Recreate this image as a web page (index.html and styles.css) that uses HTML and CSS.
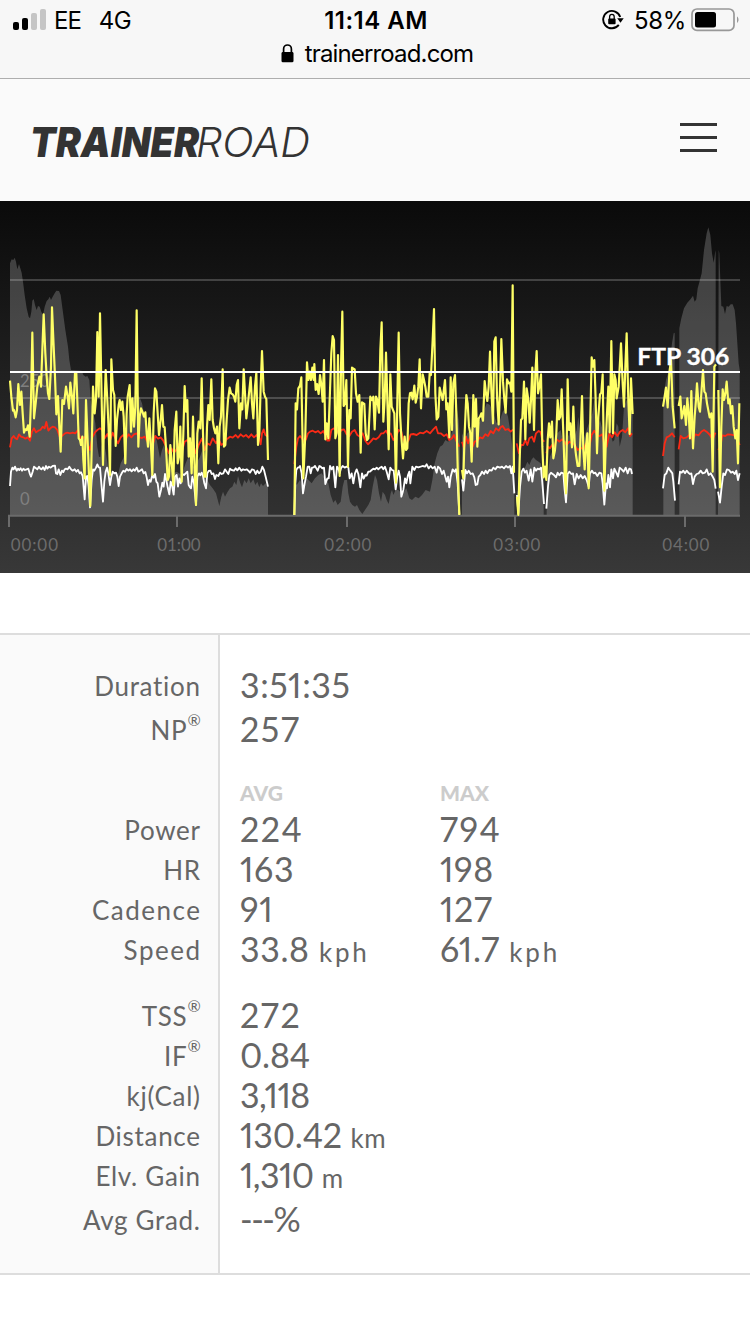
FILE: index.html
```
<!DOCTYPE html>
<html lang="en">

<head>
    <meta charset="utf-8">
    <title>TrainerRoad</title>
    <link rel="stylesheet" href="styles.css">
</head>

<body>
    <div class="browser-bar">
        <div class="status">
            <div class="status-left">
                <svg width="34" height="22" viewBox="0 0 34 22">
                    <rect x="0" y="13" width="6" height="8" rx="2" />
                    <rect x="9" y="9" width="6" height="12" rx="2" />
                    <rect x="18" y="4" width="6" height="17" rx="2" fill="#c5c5c5" />
                    <rect x="27" y="0" width="6" height="21" rx="2" fill="#c5c5c5" />
                </svg>
                <span class="carrier">EE</span>
                <span class="network">4G</span>
            </div>
            <div class="time">11:14 AM</div>
            <div class="status-right">
                <svg width="22" height="22" viewBox="0 0 22 22">
                    <path d="M16.8 15.9A8.7 8.7 0 1 1 18.2 8" fill="none" stroke="#000" stroke-width="1.9" />
                    <path d="M15.2 9.2h6.5l-3.2 4.6z" />
                    <rect x="6.2" y="9.5" width="7.4" height="5.7" rx="1" />
                    <path d="M7.6 10V7.7a2.3 2.3 0 0 1 4.6 0V10" fill="none" stroke="#000" stroke-width="1.3" />
                </svg>
                <span class="percent">58%</span>
                <svg width="48" height="24" viewBox="0 0 48 24">
                    <rect x="1" y="1" width="42" height="21.4" rx="5" fill="none" stroke="#989898" stroke-width="1.7" />
                    <rect x="4" y="4" width="21" height="15.4" rx="2.5" />
                    <path d="M46 8.5c2 1.4 2 5 0 6.5z" fill="#989898" />
                </svg>
            </div>
        </div>
        <div class="address">
            <svg width="13" height="19" viewBox="0 0 13 19">
                <rect x="0.5" y="8" width="12" height="10.3" rx="1.4" />
                <path d="M2.6 9V5a3.9 4 0 0 1 7.8 0v4" fill="none" stroke="#000" stroke-width="1.7" />
            </svg>
            <span class="domain">trainerroad.com</span>
        </div>
    </div>

    <header class="header">
        <svg class="logo" width="300" height="60" viewBox="0 0 300 60">
            <text class="logo-bold" x="0" y="47" textLength="169" lengthAdjust="spacingAndGlyphs">TRAINER</text>
            <text class="logo-light" x="166" y="47" textLength="114" lengthAdjust="spacingAndGlyphs">ROAD</text>
        </svg>
        <div class="menu">
            <span></span>
            <span></span>
            <span></span>
        </div>
    </header>

    <svg class="chart" width="750" height="372" viewBox="0 3 2250 1116">
        <!-- elevation -->
        <g class="elevation">
            <path d="M30 945V190L35 178 40 180 44 173 48 185 52 208 57 192 61 205 65 218 69 245 74 285 80 325 86 350 90 355 94 335 97 302 101 297 105 315 110 330 114 318 119 320 124 335 129 345 134 320 140 303 145 298 149 290 153 300 158 290 164 280 169 272 177 273 182 285 188 330 196 390 204 440 208 480 213 510 245 512 250 525 257 530 262 528 268 540 272 600 280 640 286 670 292 740 297 770 301 772 304 740 310 720 318 760 324 800 332 820 345 822 355 820 362 790 370 775 378 740 385 650 392 600 400 590 410 585 418 590 426 610 434 650 444 690 452 720 460 700 470 720 480 775 486 750 492 735 500 770 508 800 520 820 530 815 545 825 557 790 565 770 570 780 580 800 590 790 600 770 607 750 613 800 622 840 630 855 638 865 648 880 658 918 664 890 669 875 675 890 683 875 690 865 697 860 703 845 709 855 714 828 721 850 726 862 733 840 740 850 746 835 752 850 760 838 766 855 772 845 778 862 783 850 789 858 797 850 804 862V945z" />
            <path d="M883 945L884 845 890 855 900 840 910 860 920 835 935 850 945 835 955 825 965 820 975 835 985 850 992 885 1000 908 1006 900 1013 915 1022 905 1028 860 1033 840 1041 840 1045 880 1050 905 1057 915 1065 920 1071 915 1078 930 1087 942 1095 930 1105 915 1112 900 1118 860 1125 825 1131 840 1137 880 1143 905 1148 875 1155 885 1160 900 1166 912 1172 880 1176 870 1180 885 1187 870 1195 870 1205 880 1212 875 1219 865 1228 895 1236 900 1246 890 1256 895 1266 885 1277 870 1290 875 1297 840 1304 790 1312 760 1320 740 1328 735 1336 720 1345 725 1355 700 1362 660 1366 620 1371 630 1376 660 1380 720V945z" />
            <path d="M1386 945V700L1394 720 1402 700 1412 690 1424 680 1440 665 1450 640 1460 610 1470 615 1480 640 1490 670 1500 660 1508 635 1516 625 1524 650 1532 700 1538 750 1543 800V945z" />
            <path d="M1551 945V880L1560 850 1568 810 1576 800 1582 785 1588 795 1594 780 1600 772 1608 780 1616 785 1622 790 1631 830V945z" />
            <path d="M1640 945V850L1650 770 1656 755 1664 740 1672 700 1682 690 1690 730 1700 720 1712 690 1720 720 1730 690 1735 650 1740 700 1750 720 1760 690 1770 660 1777 640 1783 600 1788 605 1794 680 1800 660 1808 690 1815 740 1825 690 1832 700 1838 725 1843 720 1850 670 1855 680 1859 740 1866 710 1872 620 1880 600 1890 600 1898 620V945z" />
            <path d="M1990 945V590L1998 540 2004 520 2010 480 2016 430 2021 400 2024 398V945z" />
            <path d="M2038 945V385L2044 355 2052 325 2062 308 2072 297 2079 287 2084 305 2089 298 2093 265 2099 243 2105 220 2112 150 2120 100 2125 82 2131 105 2136 160 2141 188 2145 160 2147 150V945z" />
            <path d="M2154 945L2156 150 2158 160 2161 240 2164 318 2170 320 2175 342 2180 318 2186 320 2192 313 2198 313 2204 330 2208 370 2212 430 2216 490 2219 510V945z" />
        </g>

        <!-- grid and axis -->
        <path class="grid" d="M30 240H2220M30 594H2220" />
        <path class="axis" d="M24 947H2220M27 950V981M531 950V981M1041 950V981M1545 950V981M2055 950V981" />
        <g class="y-labels">
            <text x="60" y="561" textLength="88">250</text>
            <text x="60" y="915" textLength="31">0</text>
        </g>
        <g class="x-labels">
            <text x="32" y="1053" textLength="142">00:00</text>
            <text x="472" y="1053" textLength="130">01:00</text>
            <text x="973" y="1053" textLength="141">02:00</text>
            <text x="1480" y="1053" textLength="141">03:00</text>
            <text x="1987" y="1053" textLength="141">04:00</text>
        </g>

        <!-- heart rate -->
        <g class="line hr">
            <polyline points="30,742 35,715 41,708 46,715 51,718 57,703 63,710 70,712 76,716 83,712 90,722 96,695 102,685 108,697 115,692 121,690 128,680 134,685 139,666 145,692 151,685 158,680 165,682 172,690 180,712 187,707 195,700 202,698 210,700 218,698 226,700 234,690 241,718 248,715 256,710 262,730 270,750 277,712 285,697 292,690 300,685 307,690 314,715 322,702 330,722 338,698 346,715 354,730 362,712 370,705 378,716 386,703 394,712 402,703 410,700 418,712 426,714 434,710 442,725 450,715 458,735 466,708 474,716 482,712 490,722 498,740 507,760 514,745 522,758 530,748 538,730 546,752 554,725 562,720 570,735 578,730 588,760 596,735 606,715 614,750 622,730 630,735 638,715 648,730 656,718 664,735 672,730 680,718 690,710 698,713 707,705 714,713 722,703 730,710 738,705 746,713 754,703 762,712 770,705 778,715 782,733 786,700 791,688 796,705 804,710" />
            <polyline points="883,792 889,740 894,715 900,708 906,715 912,725 918,718 924,700 930,695 938,692 946,697 954,693 962,700 970,693 976,705 982,722 988,722 994,690 1002,685 1010,692 1018,700 1024,690 1032,688 1040,703 1048,708 1056,695 1064,690 1072,705 1080,710 1088,700 1096,722 1104,733 1112,725 1120,715 1128,718 1136,712 1144,700 1150,700 1158,692 1164,703 1172,700 1180,720 1188,710 1196,690 1204,695 1210,720 1218,732 1226,720 1232,703 1240,702 1250,705 1260,698 1270,700 1280,693 1290,700 1300,688 1308,680 1314,700 1322,700 1332,708 1340,703 1348,720 1356,715 1362,705 1370,725 1378,740" />
            <polyline points="1386,725 1392,745 1398,710 1404,730 1411,710 1418,740 1424,725 1432,722 1440,712 1448,715 1456,703 1464,708 1472,693 1480,700 1488,685 1496,692 1502,682 1508,678 1516,690 1524,687 1532,695 1540,688" />
            <polyline points="1550,730 1557,760 1563,735 1570,735 1576,720 1582,735 1588,715 1596,710 1602,725 1608,700 1616,693 1622,697 1627,720 1633,725" />
            <polyline points="1639,760 1645,740 1650,745 1656,735 1663,740 1670,718 1678,725 1686,718 1693,725 1700,735 1708,725 1716,730 1724,735 1733,750 1742,743 1750,748 1758,730 1766,750 1775,705 1783,692 1791,706 1799,708 1807,703 1813,735 1820,740 1828,700 1836,712 1844,697 1852,708 1860,695 1868,690 1876,697 1884,685 1890,708 1896,700" />
            <polyline points="1989,768 1994,730 2000,712 2008,708 2016,700 2024,712" />
            <polyline points="2036,748 2042,708 2050,715 2060,712 2068,705 2078,720 2086,703 2096,706 2104,695 2112,690 2122,697 2130,705 2138,720 2146,698" />
            <polyline points="2155,750 2161,738 2167,706 2176,708 2184,703 2194,704 2202,706 2210,712 2219,735" />
        </g>

        <!-- cadence -->
        <g class="line cadence">
            <polyline points="30,858 33,815 37,803 41,808 45,800 50,812 54,806 58,810 62,805 66,812 70,806 75,810 80,808 85,806 89,820 93,830 98,815 102,800 107,804 112,808 117,800 121,806 125,808 129,802 134,810 138,798 142,806 147,800 152,803 158,798 165,797 168,820 172,822 176,808 181,825 186,812 190,816 194,808 198,806 203,808 208,800 213,808 218,812 224,808 229,815 234,810 239,820 243,817 248,828 254,898 258,830 262,828 266,860 270,922 275,840 279,808 283,812 288,803 292,793 296,802 300,803 304,850 309,905 313,845 317,815 321,803 325,820 330,855 334,830 338,815 343,820 348,818 352,830 356,858 360,830 365,820 370,812 375,815 380,807 385,812 390,808 395,814 400,808 405,812 410,803 415,815 420,812 426,808 431,820 436,816 440,832 444,855 448,840 452,845 457,825 461,833 465,822 469,845 473,850 478,890 483,870 487,848 491,860 495,822 499,840 503,862 508,883 512,845 516,855 521,884 525,830 530,825 534,860 538,835 542,850 547,822 552,825 557,820 562,815 566,855 570,862 573,865 577,830 582,850 588,915 592,830 597,820 601,826 605,818 609,828 613,850 618,865 622,820 626,813 631,812 635,822 640,820 645,837 649,825 655,828 660,818 665,822 670,820 675,808 680,815 685,822 690,806 695,810 702,812 707,805 712,811 718,803 724,812 729,808 735,810 740,808 745,812 750,818 756,808 762,810 767,822 772,812 777,820 782,815 787,800 792,810 797,830 804,860" />
            <polyline points="883,945 886,850 889,810 893,803 897,802 900,798 905,820 909,880 914,850 918,830 923,800 928,800 932,820 936,803 941,802 945,798 949,805 953,812 958,798 962,800 967,805 972,803 976,852 982,835 986,835 990,798 995,808 1000,800 1006,862 1011,800 1015,805 1019,820 1023,805 1028,798 1034,803 1040,800 1045,802 1049,835 1055,820 1060,850 1065,820 1070,808 1075,822 1081,862 1086,820 1091,836 1096,825 1100,827 1105,815 1110,815 1115,810 1120,806 1125,808 1130,803 1135,808 1140,803 1145,800 1150,808 1155,800 1160,815 1166,838 1171,803 1176,810 1181,812 1187,868 1192,830 1196,812 1200,830 1204,890 1210,870 1215,835 1219,850 1224,825 1228,815 1231,850 1237,800 1243,810 1248,800 1255,802 1262,800 1268,798 1275,800 1280,793 1286,805 1292,798 1298,805 1304,800 1310,818 1314,800 1320,805 1326,822 1331,812 1336,830 1340,845 1344,830 1348,862 1352,830 1358,808 1363,815 1368,808 1373,850 1378,943" />
            <polyline points="1386,838 1390,872 1396,810 1401,820 1406,812 1412,822 1418,820 1423,832 1427,855 1432,853 1436,830 1441,825 1446,815 1452,822 1457,812 1462,820 1468,810 1475,812 1480,803 1486,808 1492,800 1500,803 1506,800 1512,805 1518,798 1524,803 1530,798 1534,820 1538,800 1543,880" />
            <polyline points="1551,885 1555,940 1560,860 1565,815 1570,806 1575,818 1580,812 1586,842 1592,808 1597,845 1603,803 1608,812 1613,806 1618,808 1623,803 1628,860 1632,912" />
            <polyline points="1639,926 1644,860 1648,825 1653,818 1658,822 1663,826 1668,832 1673,818 1678,826 1684,818 1690,820 1694,870 1698,907 1703,822 1708,815 1714,822 1719,820 1724,853 1730,822 1736,835 1742,825 1748,835 1754,828 1760,840 1766,860 1770,820 1776,812 1781,820 1786,818 1792,828 1798,818 1804,820 1808,850 1813,914 1818,850 1821,865 1825,825 1830,862 1834,808 1839,835 1843,806 1850,820 1854,830 1859,803 1865,808 1871,815 1877,803 1883,820 1888,806 1893,808 1896,822" />
            <polyline points="1989,865 1994,825 1999,820 2005,803 2011,812 2017,820 2020,845 2025,902" />
            <polyline points="2036,853 2040,815 2045,818 2050,812 2055,820 2060,812 2065,818 2070,822 2074,820 2079,852 2084,830 2090,822 2096,820 2102,812 2108,820 2115,818 2120,808 2126,825 2132,820 2138,830 2143,840 2147,866" />
            <polyline points="2154,875 2160,908 2165,860 2170,820 2175,825 2181,808 2187,810 2193,818 2198,815 2204,822 2209,812 2214,840 2219,820" />
        </g>

        <!-- power -->
        <g class="line power">
            <polyline points="30,542 34,590 39,632 42,630 47,652 51,630 55,552 60,615 64,575 68,640 72,698 76,688 80,690 84,676 89,710 93,600 97,398 102,655 107,610 112,560 118,530 123,560 127,450 131,343 136,460 140,530 144,580 148,597 153,500 156,322 161,440 165,530 169,643 174,588 177,660 182,755 187,600 192,612 198,560 203,590 207,625 211,548 216,590 220,640 225,518 229,520 233,630 236,715 240,720 243,735 247,710 250,780 254,835 258,600 262,700 266,800 271,918 275,750 279,560 284,640 288,600 292,396 296,590 300,340 305,600 309,795 313,640 317,510 322,600 326,690 330,825 334,478 339,570 343,585 347,738 351,660 356,615 359,600 363,630 367,605 371,650 376,790 380,640 383,590 389,555 393,695 397,595 402,680 406,620 410,331 415,740 419,650 423,625 428,637 432,650 436,637 440,700 444,740 448,655 453,740 457,825 461,640 465,565 469,575 473,640 477,705 482,660 486,615 490,680 494,682 499,760 503,840 507,830 511,735 516,800 520,855 524,690 529,635 533,790 537,770 541,680 545,845 550,700 554,558 558,635 562,600 566,770 570,715 575,820 579,650 583,780 588,915 592,700 596,665 601,685 605,535 609,700 613,830 617,830 621,680 625,615 629,660 634,538 638,660 642,685 646,700 651,680 655,790 659,680 663,650 668,508 672,740 676,735 680,660 684,600 689,563 693,580 698,583 702,590 706,605 710,555 714,540 718,685 723,610 727,628 731,508 735,580 739,655 744,610 748,570 752,532 756,610 760,655 765,560 769,518 774,735 778,700 782,560 786,453 791,575 795,590 799,597 804,780" />
            <polyline points="883,945 887,610 891,628 895,565 900,557 904,532 910,835 916,700 921,487 925,540 929,515 933,540 937,503 941,540 943,492 947,570 951,552 956,582 960,525 964,555 968,605 972,480 976,718 980,670 985,715 989,600 994,460 998,408 1002,420 1006,715 1010,700 1014,465 1019,828 1023,500 1027,335 1031,618 1035,610 1039,540 1044,800 1048,630 1052,655 1056,503 1064,508 1068,580 1073,605 1078,585 1082,758 1086,607 1093,612 1097,700 1101,720 1105,715 1111,590 1116,600 1120,590 1124,688 1128,590 1132,600 1137,638 1141,450 1145,367 1150,665 1154,600 1158,458 1162,600 1166,748 1171,523 1175,620 1183,640 1188,848 1192,600 1196,398 1200,640 1204,710 1209,775 1214,710 1218,750 1222,745 1226,610 1230,580 1234,578 1238,598 1243,557 1247,608 1251,590 1255,560 1259,478 1263,625 1268,523 1272,540 1276,560 1280,590 1285,590 1289,520 1293,525 1298,420 1302,327 1306,580 1310,658 1315,650 1319,563 1323,580 1328,600 1335,540 1339,628 1343,610 1348,712 1352,532 1356,690 1360,550 1365,525 1369,640 1373,800 1378,945" />
            <polyline points="1386,810 1390,835 1394,700 1399,585 1403,610 1407,680 1411,700 1415,785 1420,585 1424,680 1428,597 1432,740 1436,655 1440,650 1444,640 1449,662 1454,543 1458,580 1462,603 1466,560 1470,455 1474,570 1479,670 1483,425 1487,412 1491,590 1496,673 1500,570 1504,417 1509,545 1513,600 1517,638 1521,538 1526,550 1530,548 1534,575 1538,256 1542,818" />
            <polyline points="1551,890 1555,945 1559,780 1563,660 1567,655 1572,545 1576,718 1580,565 1585,600 1589,668 1593,600 1597,503 1602,690 1606,520 1610,453 1614,580 1618,560 1623,523 1627,740 1631,832 1635,800 1639,840 1643,720 1647,670 1651,712 1656,665 1660,775 1665,750 1669,700 1673,600 1677,658 1681,650 1685,568 1690,700 1694,820 1698,880 1703,538 1707,690 1711,670 1716,742 1720,620 1724,730 1728,765 1733,798 1738,798 1742,700 1746,588 1750,750 1754,808 1758,740 1762,700 1766,865 1770,700 1775,472 1779,500 1783,480 1787,600 1791,760 1795,650 1800,583 1804,578 1808,523 1813,872 1817,740 1821,640 1825,560 1829,697 1834,423 1839,700 1843,523 1847,540 1850,595 1856,560 1863,430 1868,550 1872,620 1876,500 1880,400 1885,600 1889,702 1893,535 1898,642" />
            <polyline points="1989,620 1994,590 1998,563 2003,622 2008,520 2013,480 2018,620 2024,685" />
            <polyline points="2036,618 2041,590 2045,655 2049,640 2053,618 2058,675 2062,595 2066,640 2070,715 2074,573 2079,745 2084,650 2088,600 2091,550 2096,620 2100,635 2104,580 2109,510 2113,575 2117,580 2121,610 2129,652 2134,640 2138,815 2143,500 2148,493" />
            <polyline points="2155,570 2160,862 2164,680 2168,568 2172,600 2176,580 2180,545 2185,610 2189,598 2193,640 2197,618 2201,680 2206,715 2210,690 2214,790 2218,610" />
        </g>

        <path class="ftp-line" d="M30 516H2220" />
        <text class="ftp-label" x="1912" y="494" textLength="276" lengthAdjust="spacingAndGlyphs">FTP 306</text>
    </svg>

    <section class="stats">
        <div class="row tall"><div class="label">Duration</div><div class="value">3:51:35</div></div>
        <div class="row tall"><div class="label">NP<sup>®</sup></div><div class="value open">257</div></div>
        <div class="row heads"><div class="label"></div><div class="value head">AVG</div><div class="value head">MAX</div></div>
        <div class="row"><div class="label">Power</div><div class="value open">224</div><div class="value open">794</div></div>
        <div class="row"><div class="label">HR</div><div class="value">163</div><div class="value">198</div></div>
        <div class="row"><div class="label loose">Cadence</div><div class="value">91</div><div class="value">127</div></div>
        <div class="row"><div class="label loose">Speed</div><div class="value">33.8 <small class="wide">kph</small></div><div class="value">61.7<small class="wide"> kph</small></div></div>
        <div class="row gap"><div class="label">TSS<sup>®</sup></div><div class="value open">272</div></div>
        <div class="row"><div class="label">IF<sup>®</sup></div><div class="value tight">0.84</div></div>
        <div class="row"><div class="label">kj(Cal)</div><div class="value tighter">3,118</div></div>
        <div class="row"><div class="label">Distance</div><div class="value tight">130.42 <small>km</small></div></div>
        <div class="row"><div class="label">Elv. Gain</div><div class="value tighter">1,310 <small>m</small></div></div>
        <div class="row last"><div class="label">Avg Grad.</div><div class="value dashes">---%</div></div>
    </section>
</body>

</html>
```
FILE: styles.css
```
body {
    margin: 0;
    background-color: #fff;
    font-family: Lato, "Open Sans", sans-serif;
    color: #666;
}

svg {
    display: block;
}

/* Browser bar */
.browser-bar {
    box-sizing: border-box;
    height: 79px;
    background-color: #f7f7f7;
    border-bottom: 1px solid #aeaeae;
    color: #000;
    font-family: Inter, sans-serif;
    font-size: 24px;
}

.status {
    display: grid;
    grid-template-columns: 1fr auto 1fr;
    align-items: center;
    height: 40px;
    padding: 0 11px 0 13px;
}

.status-left,
.status-right {
    display: flex;
    align-items: center;
}

.status-right {
    justify-content: flex-end;
}

.carrier {
    margin-left: 7px;
    letter-spacing: -1px;
}

.network {
    margin-left: 18px;
    letter-spacing: -0.5px;
}

.time {
    font-weight: 600;
    font-size: 24px;
    letter-spacing: 0.5px;
}

.percent {
    margin: 0 5px 0 10px;
    letter-spacing: -0.3px;
}

.address {
    display: flex;
    justify-content: center;
    align-items: center;
    gap: 11px;
    height: 27px;
    padding-left: 4px;
}

.domain {
    letter-spacing: -0.85px;
}

/* Header */
.header {
    display: flex;
    justify-content: space-between;
    align-items: center;
    height: 122px;
    padding: 0 33px 0 30px;
    background-color: #fafafa;
}

.logo text {
    font-family: Inter, sans-serif;
    font-style: italic;
    font-size: 41px;
    fill: #333;
}

.logo .logo-bold {
    font-weight: 900;
}

.logo .logo-light {
    font-weight: 300;
}

.menu {
    display: flex;
    flex-direction: column;
    gap: 10px;
    width: 37px;
    padding-bottom: 6px;
}

.menu span {
    height: 3px;
    background-color: #333;
}

/* Chart */
.chart {
    background: linear-gradient(#0a0a0a, #383838);
    font-family: Lato, sans-serif;
}

.elevation {
    fill: #fff;
    fill-opacity: 0.2;
}

.grid {
    stroke: #fff;
    stroke-opacity: 0.2;
    stroke-width: 6;
}

.axis {
    fill: none;
    stroke: #6b6b6b;
    stroke-width: 6;
}

.y-labels {
    fill: #808080;
    font-size: 50px;
}

.x-labels {
    fill: #6c6c6c;
    font-size: 51px;
}

.line {
    fill: none;
    stroke-width: 5.5;
    stroke-linejoin: round;
}

.hr {
    stroke: #fa2a16;
}

.cadence {
    stroke: #fff;
}

.power {
    stroke: #ffff66;
    stroke-width: 6.5;
}

.ftp-line {
    stroke: #fff;
    stroke-width: 6;
}

.ftp-label {
    fill: #fff;
    font-size: 67px;
    font-weight: 700;
    stroke: #fff;
    stroke-width: 1px;
}

/* Ride stats */
.stats {
    box-sizing: border-box;
    height: 642px;
    margin-top: 60px;
    padding-top: 29px;
    border-top: 2px solid #ddd;
    border-bottom: 2px solid #ddd;
    background: linear-gradient(to right, #fafafa 218px, #ddd 218px, #ddd 220px, #fff 220px);
}

.row {
    display: grid;
    grid-template-columns: 200px 200px 200px;
    height: 40px;
    line-height: 40px;
}

.row.tall {
    height: 44px;
    line-height: 44px;
}

.row.heads {
    height: 28px;
    margin-top: 32px;
    margin-bottom: -2px;
    line-height: 20px;
}

.row.gap {
    margin-top: 26px;
}

.row.last {
    height: 48px;
    line-height: 48px;
}

.label {
    margin-right: -0.7px;
    text-align: right;
    font-size: 26px;
    letter-spacing: 0.7px;
}

.label.loose {
    margin-right: -1.5px;
    letter-spacing: 1.5px;
}

.label sup {
    font-size: 16px;
    line-height: 0;
    letter-spacing: 0;
    vertical-align: 14px;
}

.value {
    margin-top: -1px;
    margin-right: -40px;
    padding-left: 40px;
    font-size: 34px;
    letter-spacing: 0.6px;
    white-space: nowrap;
    font-feature-settings: "pnum";
}

.value.open {
    letter-spacing: 1.6px;
}

.value.tight {
    letter-spacing: -0.1px;
}

.value.tighter {
    letter-spacing: -0.6px;
}

.value.dashes {
    letter-spacing: -1.5px;
}

.value small {
    font-size: 26px;
    letter-spacing: 0.5px;
}

.value .wide {
    letter-spacing: 2.8px;
}

.value.head {
    color: #ccc;
    font-size: 21px;
    font-weight: 900;
    letter-spacing: 0;
}
```
